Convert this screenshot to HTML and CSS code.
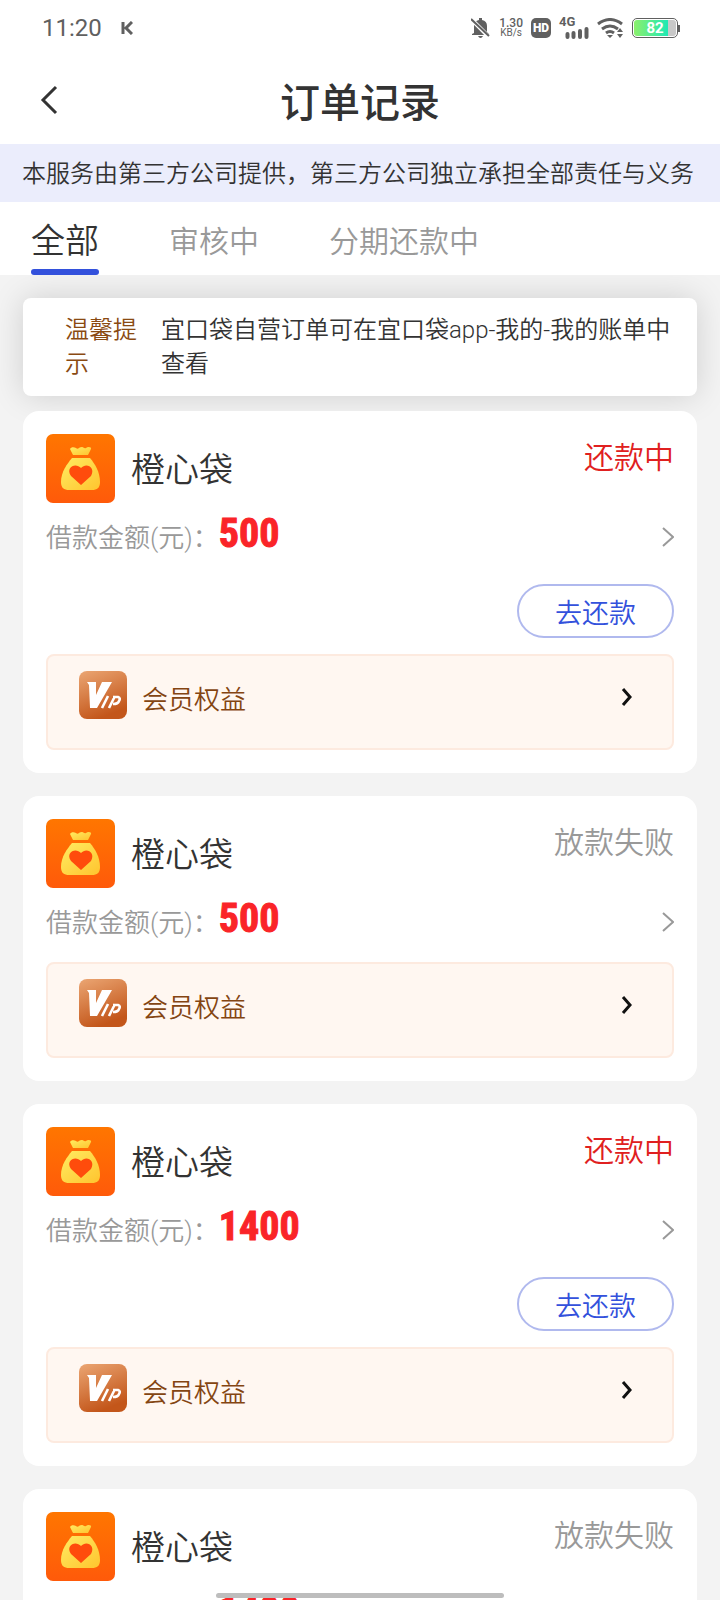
FILE: index.html
```html
<!DOCTYPE html>
<html lang="zh-CN">
<head>
<meta charset="utf-8">
<meta name="viewport" content="width=device-width, initial-scale=1">
<title>订单记录</title>
<link rel="stylesheet" href="styles.css">
</head>
<body>
<svg class="defs" aria-hidden="true">
  <defs>
    <linearGradient id="tile" x1="0" y1="0" x2="0" y2="1"><stop offset="0" stop-color="#ff7600"/><stop offset="1" stop-color="#ff5a0a"/></linearGradient>
    <linearGradient id="gold" x1="0" y1="0" x2="1" y2="1"><stop offset="0" stop-color="#ffec62"/><stop offset="1" stop-color="#ffc42e"/></linearGradient>
    <linearGradient id="bronze" x1="0" y1="0" x2="0.4" y2="1"><stop offset="0" stop-color="#eba673"/><stop offset="1" stop-color="#c3561a"/></linearGradient>
  </defs>
  <symbol id="bag" viewBox="0 0 69 69">
    <rect width="69" height="69" rx="7" fill="url(#tile)"/>
    <path d="M24 15c1-2 4-2 6-1 2 2 3-1 6-1 2 0 2 2 4 1 2-2 6-1 5 1l-3 6H27z" fill="url(#gold)"/>
    <path d="M26 24h18c5 6 10 14 10 24 0 6-3 8-8 8H23c-5 0-8-2-8-8 0-10 6-18 11-24z" fill="url(#gold)"/>
    <path d="M35 51 25 42c-6-9 5-14 10-8 5-6 15-1 10 8z" fill="#ff4c0c"/>
  </symbol>
  <symbol id="vip" viewBox="0 0 48 48">
    <rect width="48" height="48" rx="8" fill="url(#bronze)"/>
    <path d="M8 11h9v13l6-13h10L18 37h-7l-1-23z" fill="#fff"/>
    <path d="m29 25-6 12M36 25l-6 12M34 26h5q3 1 1 4-1 3-6 3" fill="none" stroke="#fff" stroke-width="2.600"/>
  </symbol>
  <symbol id="chevron" viewBox="0 0 12 20"><path d="m1 1 10 9-10 9" fill="none" stroke="currentColor" stroke-width="2"/></symbol>
  <symbol id="chevron-bold" viewBox="0 0 12 20"><path d="m2 2 7 8-7 8" fill="none" stroke="currentColor" stroke-width="3"/></symbol>
</svg>

<div class="app">
  <div class="status">
    <span class="status-time">11:20</span>
    <svg class="status-k" viewBox="0 0 12 14"><path d="M2 1v12M11 1 5 7l6 6" fill="none" stroke="currentColor" stroke-width="3"/></svg>
    <div class="status-right">
      <svg width="20" height="22" viewBox="0 0 20 22"><path d="M3 16V9q0-5 5-6V1h3v2q5 1 5 6v6l2 2v1H1v-1zM7 19h5q-1 2-2.500 2T7 19z" fill="currentColor"/><path d="m1 3 17 17" stroke="#fff" stroke-width="4"/><path d="m0 2 18 17" stroke="currentColor" stroke-width="2"/></svg>
      <span class="net"><b>1.30</b><span>KB/s</span></span>
      <span class="hd">HD</span>
      <span class="cell"><b>4G</b><svg width="24" height="12" viewBox="0 0 24 12"><path d="M2.500 7v3M8.500 6v4M15 4v6M21.500 2v8" stroke="currentColor" stroke-width="4" stroke-linecap="round"/></svg></span>
      <svg width="27" height="21" viewBox="0 0 27 21"><path d="M1 6q12-9 24 0M5 11q8-6 16 0" fill="none" stroke="currentColor" stroke-width="3"/><path d="M9 15q4-3 8 0" fill="none" stroke="currentColor" stroke-width="3"/><path d="m10 17 3 3 3-3zM20 14l3-4 3 4zM20 16l3 4 3-4z" fill="currentColor"/></svg>
      <span class="battery">82</span>
    </div>
  </div>

  <header class="bar">
    <button class="back" aria-label="返回"><svg width="18" height="30" viewBox="0 0 18 30"><path d="M16 2 3 15l13 13" fill="none" stroke="currentColor" stroke-width="3"/></svg></button>
    <h1>订单记录</h1>
  </header>

  <p class="notice">本服务由第三方公司提供，第三方公司独立承担全部责任与义务</p>

  <nav class="tabs">
    <button class="tab tab-on">全部</button>
    <button class="tab">审核中</button>
    <button class="tab">分期还款中</button>
  </nav>

  <main class="list">
    <section class="tip">
      <span class="tip-label">温馨提示</span>
      <p>宜口袋自营订单可在宜口袋app-我的-我的账单中查看</p>
    </section>

    <article class="card">
      <div class="card-head"><svg class="logo"><use href="#bag"/></svg><h2>橙心袋</h2><span class="state state-due">还款中</span></div>
      <div class="amount"><span>借款金额(元)：</span><strong>500</strong><svg class="go"><use href="#chevron"/></svg></div>
      <div class="actions"><button class="repay">去还款</button></div>
      <a class="vip" href="#"><svg class="vip-icon"><use href="#vip"/></svg><span>会员权益</span><svg class="vip-go"><use href="#chevron-bold"/></svg></a>
    </article>

    <article class="card">
      <div class="card-head"><svg class="logo"><use href="#bag"/></svg><h2>橙心袋</h2><span class="state">放款失败</span></div>
      <div class="amount"><span>借款金额(元)：</span><strong>500</strong><svg class="go"><use href="#chevron"/></svg></div>
      <a class="vip" href="#"><svg class="vip-icon"><use href="#vip"/></svg><span>会员权益</span><svg class="vip-go"><use href="#chevron-bold"/></svg></a>
    </article>

    <article class="card">
      <div class="card-head"><svg class="logo"><use href="#bag"/></svg><h2>橙心袋</h2><span class="state state-due">还款中</span></div>
      <div class="amount"><span>借款金额(元)：</span><strong>1400</strong><svg class="go"><use href="#chevron"/></svg></div>
      <div class="actions"><button class="repay">去还款</button></div>
      <a class="vip" href="#"><svg class="vip-icon"><use href="#vip"/></svg><span>会员权益</span><svg class="vip-go"><use href="#chevron-bold"/></svg></a>
    </article>

    <article class="card">
      <div class="card-head"><svg class="logo"><use href="#bag"/></svg><h2>橙心袋</h2><span class="state">放款失败</span></div>
      <div class="amount"><span>借款金额(元)：</span><strong>1400</strong><svg class="go"><use href="#chevron"/></svg></div>
    </article>
  </main>
  <div class="home"></div>
</div>
</body>
</html>
```

FILE: styles.css
```css
* { box-sizing: border-box; }
body, h1, h2, p { margin: 0; font-weight: 350; }
body {
  font-family: Roboto, "Noto Sans CJK SC", sans-serif;
  color: #333;
  background: #f3f3f3;
}
button { font: inherit; background: none; border: 0; padding: 0; color: inherit; }
svg { display: block; flex: none; }
.defs { position: absolute; width: 0; height: 0; }

.app { height: 100vh; display: flex; flex-direction: column; overflow: hidden; }

/* Status bar */
.status {
  display: flex;
  align-items: center;
  height: 56px;
  padding: 0 42px;
  background: #fff;
  color: #606060;
  font-weight: 400;
  flex: none;
}
.status-time { font-size: 24px; }
.status-k { width: 12px; height: 14px; margin-left: 19px; }
.status-right { display: flex; align-items: center; gap: 8px; margin-left: auto; }
.net { display: flex; flex-direction: column; align-items: center; font-size: 10px; line-height: 10px; }
.net b { font-size: 12px; font-weight: 500; }
.hd {
  width: 20px; height: 20px; border-radius: 5px;
  background: #606060; color: #fff;
  font-size: 12px; line-height: 20px; font-weight: 900; text-align: center;
}
.cell { display: flex; flex-direction: column; line-height: 10px; font-size: 13px; }
.cell svg { margin-left: 6px; }
.battery {
  position: relative;
  width: 46px; height: 20px;
  border: 1px solid #606060; border-radius: 5px;
  background: linear-gradient(90deg, #8cf06c, #1fe9b4 80%, #c8c8c8 80%) content-box;
  padding: 1px;
  color: #fff; font-size: 15px; line-height: 16px; font-weight: 700; text-align: center;
}
.battery::after {
  content: ""; position: absolute; right: -3px; top: 6px;
  width: 2px; height: 7px; background: #606060;
}

/* Title */
.bar {
  display: grid;
  grid-template-columns: 80px 1fr 80px;
  align-items: center;
  height: 88px;
  background: #fff;
  flex: none;
}
.back { padding-left: 40px; height: 88px; }
.bar h1 { font-size: 40px; font-weight: 500; text-align: center; }

.notice {
  padding: 2px 22px 0;
  line-height: 56px;
  font-size: 24px;
  white-space: nowrap;
  background: #ebedfc;
  flex: none;
}

.tabs {
  position: relative;
  z-index: 1;
  display: flex;
  gap: 70px;
  height: 73px;
  padding: 0 31px;
  background: #fff;
  flex: none;
}
.tab { padding-top: 6px; font-size: 30px; color: #999; border-bottom: 6px solid transparent; white-space: nowrap; }
.tab-on { position: relative; font-size: 34px; color: #333; }
.tab-on::after {
  content: ""; position: absolute; left: 0; right: 0; bottom: -6px;
  height: 6px; border-radius: 3px; background: #3351dc;
}

.list { flex: 1; min-height: 0; overflow: hidden; padding: 23px; }

.tip {
  display: flex;
  gap: 20px;
  padding: 15px 24px 15px 42px;
  margin-bottom: 15px;
  border-radius: 8px;
  background: #fff;
  box-shadow: 0 0 32px rgba(0, 0, 0, 0.15);
  font-size: 24px;
  line-height: 34px;
}
.tip-label { flex: none; width: 76px; color: #8a4a12; }

.card {
  position: relative;
  padding: 23px;
  margin-bottom: 23px;
  border-radius: 16px;
  background: #fff;
}
.card-head { display: flex; gap: 16px; height: 69px; }
.logo { width: 69px; height: 69px; }
.card h2 { font-size: 34px; line-height: 72px; }
.state { margin-left: auto; font-size: 30px; line-height: 48px; color: #999; }
.state-due { color: #e02020; }

.amount {
  display: flex;
  align-items: baseline;
  height: 74px;
  padding-top: 4px;
  font-size: 26px;
  color: #999;
}
.amount strong {
  font-family: "Roboto Condensed", Roboto, sans-serif;
  font-size: 40px;
  line-height: 54px;
  font-weight: 700;
  color: #fa2428;
  -webkit-text-stroke: 1px #fa2428;
}
.go { width: 12px; height: 20px; margin: 20px 0 0 auto; align-self: flex-start; }

.actions { display: flex; justify-content: flex-end; padding: 7px 0 16px; }
.repay {
  width: 157px; height: 54px;
  border: 2px solid #b0b9ee; border-radius: 27px;
  font-size: 27px; color: #3351dc;
}

.vip {
  display: flex;
  height: 96px;
  padding: 15px 31px;
  border: 2px solid #fdeadf;
  border-radius: 8px;
  background: #fff7f1;
  color: #844512;
  font-size: 26px;
  line-height: 58px;
  text-decoration: none;
}
.vip-icon { width: 48px; height: 48px; margin-right: 15px; }
.vip-go { width: 12px; height: 20px; margin: 16px 8px 0 auto; color: #111; }

.home {
  position: fixed;
  left: 30%; right: 30%; bottom: 2px;
  height: 5px; border-radius: 3px;
  background: #bdbdbd;
}
```
